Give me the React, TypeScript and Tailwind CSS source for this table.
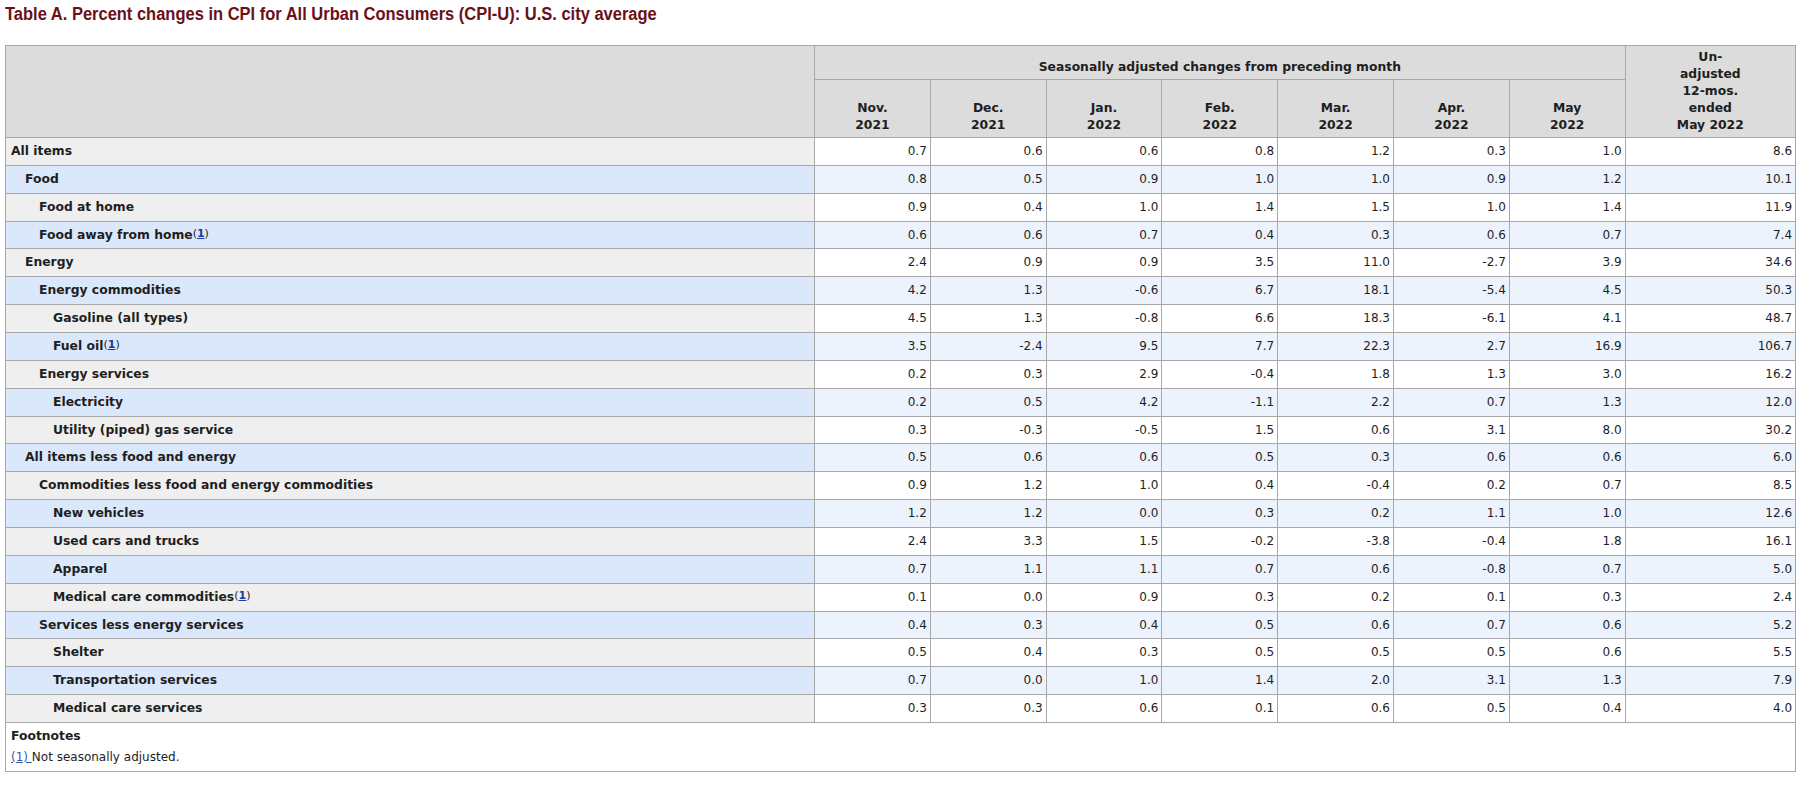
import React from 'react';

type Row = { label: string; level: number; note?: boolean; values: string[] };

const ROWS: Row[] = [
  { label: 'All items', level: 0, values: ['0.7', '0.6', '0.6', '0.8', '1.2', '0.3', '1.0', '8.6'] },
  { label: 'Food', level: 1, values: ['0.8', '0.5', '0.9', '1.0', '1.0', '0.9', '1.2', '10.1'] },
  { label: 'Food at home', level: 2, values: ['0.9', '0.4', '1.0', '1.4', '1.5', '1.0', '1.4', '11.9'] },
  { label: 'Food away from home', level: 2, note: true, values: ['0.6', '0.6', '0.7', '0.4', '0.3', '0.6', '0.7', '7.4'] },
  { label: 'Energy', level: 1, values: ['2.4', '0.9', '0.9', '3.5', '11.0', '-2.7', '3.9', '34.6'] },
  { label: 'Energy commodities', level: 2, values: ['4.2', '1.3', '-0.6', '6.7', '18.1', '-5.4', '4.5', '50.3'] },
  { label: 'Gasoline (all types)', level: 3, values: ['4.5', '1.3', '-0.8', '6.6', '18.3', '-6.1', '4.1', '48.7'] },
  { label: 'Fuel oil', level: 3, note: true, values: ['3.5', '-2.4', '9.5', '7.7', '22.3', '2.7', '16.9', '106.7'] },
  { label: 'Energy services', level: 2, values: ['0.2', '0.3', '2.9', '-0.4', '1.8', '1.3', '3.0', '16.2'] },
  { label: 'Electricity', level: 3, values: ['0.2', '0.5', '4.2', '-1.1', '2.2', '0.7', '1.3', '12.0'] },
  { label: 'Utility (piped) gas service', level: 3, values: ['0.3', '-0.3', '-0.5', '1.5', '0.6', '3.1', '8.0', '30.2'] },
  { label: 'All items less food and energy', level: 1, values: ['0.5', '0.6', '0.6', '0.5', '0.3', '0.6', '0.6', '6.0'] },
  { label: 'Commodities less food and energy commodities', level: 2, values: ['0.9', '1.2', '1.0', '0.4', '-0.4', '0.2', '0.7', '8.5'] },
  { label: 'New vehicles', level: 3, values: ['1.2', '1.2', '0.0', '0.3', '0.2', '1.1', '1.0', '12.6'] },
  { label: 'Used cars and trucks', level: 3, values: ['2.4', '3.3', '1.5', '-0.2', '-3.8', '-0.4', '1.8', '16.1'] },
  { label: 'Apparel', level: 3, values: ['0.7', '1.1', '1.1', '0.7', '0.6', '-0.8', '0.7', '5.0'] },
  { label: 'Medical care commodities', level: 3, note: true, values: ['0.1', '0.0', '0.9', '0.3', '0.2', '0.1', '0.3', '2.4'] },
  { label: 'Services less energy services', level: 2, values: ['0.4', '0.3', '0.4', '0.5', '0.6', '0.7', '0.6', '5.2'] },
  { label: 'Shelter', level: 3, values: ['0.5', '0.4', '0.3', '0.5', '0.5', '0.5', '0.6', '5.5'] },
  { label: 'Transportation services', level: 3, values: ['0.7', '0.0', '1.0', '1.4', '2.0', '3.1', '1.3', '7.9'] },
  { label: 'Medical care services', level: 3, values: ['0.3', '0.3', '0.6', '0.1', '0.6', '0.5', '0.4', '4.0'] },
];

const MONTHS = [
  ['Nov.', '2021'],
  ['Dec.', '2021'],
  ['Jan.', '2022'],
  ['Feb.', '2022'],
  ['Mar.', '2022'],
  ['Apr.', '2022'],
  ['May', '2022'],
];

const INDENT = ['pl-[5px]', 'pl-[19px]', 'pl-[33px]', 'pl-[47px]'];

// footnote marker after a label, e.g. "Fuel oil(1)"
function Note() {
  return (
    <span className="relative -top-[2px] text-[11px] font-normal">
      (<a href="#" className="font-bold text-[#1c3c9c] underline">1</a>)
    </span>
  );
}

export default function App() {
  return (
    <div className="bg-white min-h-screen text-[#1e1e1e] text-[12px] leading-[17px]" style={{ fontFamily: '"DejaVu Sans", Verdana, sans-serif' }}>
      <div className="h-[45px] pl-[5px] pt-[3px]">
        <h2
          className="inline-block origin-left scale-x-[0.916] whitespace-nowrap text-[18px] font-bold leading-[22px] text-[#6b1018]"
          style={{ fontFamily: '"Liberation Sans Narrow", "Arial Narrow", "Liberation Sans", sans-serif' }}
        >
          Table A. Percent changes in CPI for All Urban Consumers (CPI-U): U.S. city average
        </h2>
      </div>

      <table className="ml-[5px] w-[1790px] table-fixed border-collapse">
        <colgroup>
          <col className="w-[809px]" />
          {MONTHS.map((m) => (
            <col key={m[0]} className="w-[115.8px]" />
          ))}
          <col className="w-[170.4px]" />
        </colgroup>
        <thead className="text-[12.35px]">
          <tr className="h-[34px]">
            <th rowSpan={2} className="border border-[#a8a8a8] bg-[#dcdcdc]" />
            <th colSpan={7} className="border border-[#a8a8a8] bg-[#dcdcdc] px-[5px] pb-[3px] align-bottom text-center font-bold">
              Seasonally adjusted changes from preceding month
            </th>
            <th rowSpan={2} className="border border-[#a8a8a8] bg-[#dcdcdc] px-[5px] pb-[3px] align-bottom text-center font-bold">
              Un-<br />adjusted<br />12-mos.<br />ended<br />May 2022
            </th>
          </tr>
          <tr className="h-[58px]">
            {MONTHS.map((m) => (
              <th key={m[0]} className="border border-[#a8a8a8] bg-[#dcdcdc] px-[5px] pb-[3px] align-bottom text-center font-bold">
                {m[0]}
                <br />
                {m[1]}
              </th>
            ))}
          </tr>
        </thead>
        <tbody>
          {ROWS.map((r, i) => {
            const even = i % 2 === 1;
            return (
              <tr key={r.label} className="h-[27.86px]">
                <th className={`border border-[#a8a8a8] text-left text-[12.35px] font-bold ${INDENT[r.level]} ${even ? 'bg-[#dbe7fa]' : 'bg-[#efefef]'}`}>
                  {r.label}
                  {r.note && <Note />}
                </th>
                {r.values.map((v, j) => (
                  <td key={j} className={`border border-[#a8a8a8] pr-[3px] text-right ${even ? 'bg-[#ecf3fd]' : 'bg-white'}`}>
                    {v}
                  </td>
                ))}
              </tr>
            );
          })}
        </tbody>
        <tfoot>
          <tr>
            <td colSpan={9} className="border border-[#a8a8a8] px-[5px] pt-[5px] pb-[5px]">
              <div className="text-[12.35px] font-bold">Footnotes</div>
              <div className="mt-[4px]">
                <a href="#" className="text-[#3a55a8] underline">(1) </a>
                Not seasonally adjusted.
              </div>
            </td>
          </tr>
        </tfoot>
      </table>
    </div>
  );
}
